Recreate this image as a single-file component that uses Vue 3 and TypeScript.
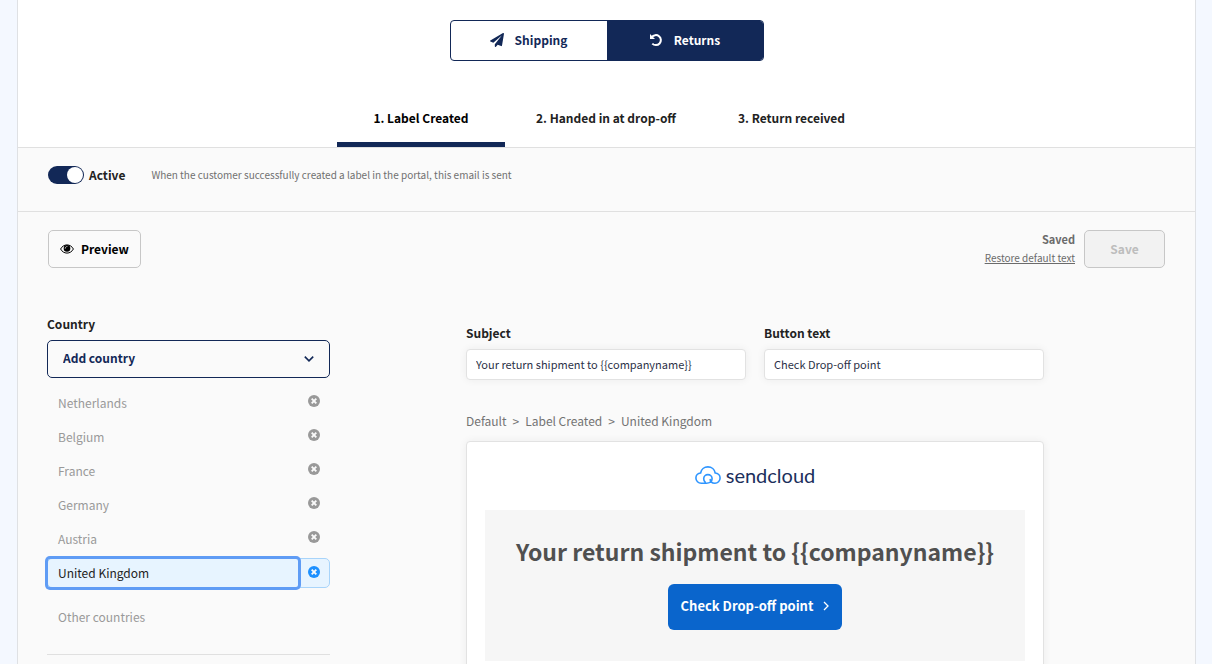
<script setup lang="ts">
import { ref } from 'vue'

interface Country {
  id: string
  name: string
}

const steps: string[] = ['1. Label Created', '2. Handed in at drop-off', '3. Return received']
const activeStep = ref(0)
const mode = ref<'shipping' | 'returns'>('returns')
const active = ref(true)

const countries = ref<Country[]>([
  { id: 'nl', name: 'Netherlands' },
  { id: 'be', name: 'Belgium' },
  { id: 'fr', name: 'France' },
  { id: 'de', name: 'Germany' },
  { id: 'at', name: 'Austria' },
  { id: 'gb', name: 'United Kingdom' },
])
const selected = ref('gb')
const subject = ref('Your return shipment to {{companyname}}')
const buttonText = ref('Check Drop-off point')

function removeCountry(id: string): void {
  countries.value = countries.value.filter((c) => c.id !== id)
}
</script>

<template>
  <main class="page">
    <header class="top">
      <div class="switcher">
        <button type="button" :class="{ on: mode === 'shipping' }" @click="mode = 'shipping'">
          <svg class="icon-mode" viewBox="0 0 512 512" aria-hidden="true">
            <path fill="currentColor" d="M476 3.200 12.500 270.600c-18.100 10.400-15.800 35.600 2.200 43.200L121 358.400l287.300-253.200c5.500-4.900 13.300 2.600 8.600 8.300L176 407v80.500c0 23.600 28.500 32.900 42.500 15.800L282 426l124.600 52.200c14.200 6 30.400-2.900 33-18.200l72-432C515 7.800 493.300-6.800 476 3.200z" />
          </svg>
          Shipping
        </button>
        <button type="button" :class="{ on: mode === 'returns' }" @click="mode = 'returns'">
          <svg class="icon-mode" viewBox="0 0 14 14" aria-hidden="true">
            <path fill="none" stroke="currentColor" stroke-width="2" d="M2.800 4.200A5 5 0 1 1 3.300 10.600" />
            <path fill="currentColor" d="M1 1v5h5z" />
          </svg>
          Returns
        </button>
      </div>
      <nav class="tabs">
        <button
          v-for="(step, i) in steps"
          :key="step"
          type="button"
          :class="{ current: i === activeStep }"
          @click="activeStep = i"
        >{{ step }}</button>
      </nav>
    </header>

    <section class="status">
      <label class="toggle"><input v-model="active" type="checkbox" />Active</label>
      <p>When the customer successfully created a label in the portal, this email is sent</p>
    </section>

    <section class="editor">
      <div class="toolbar">
        <button type="button" class="preview">
          <svg viewBox="0 0 14 10" aria-hidden="true">
            <path fill="none" stroke="currentColor" d="M.600 5C2 2.400 4.300.900 7 .900S12 2.400 13.400 5C12 7.600 9.700 9.100 7 9.100S2 7.600.600 5z" />
            <circle cx="7" cy="4.400" r="3.300" fill="currentColor" />
            <path fill="none" stroke="#fafafa" stroke-width=".7" stroke-linecap="round" d="M5.200 4.300C5.200 3.200 6 2.500 7 2.500" />
          </svg>
          Preview
        </button>
        <div class="saving">
          <div class="saved">
            <strong>Saved</strong>
            <a href="#">Restore default text</a>
          </div>
          <button type="button" class="save" disabled>Save</button>
        </div>
      </div>

      <div class="columns">
        <aside class="countries">
          <label class="field-label" for="country">Country</label>
          <div class="select">
            <select id="country">
              <option>Add country</option>
            </select>
            <svg viewBox="0 0 10 6" aria-hidden="true">
              <path fill="none" stroke="currentColor" stroke-width="1.600" d="M.800.600 5 4.800 9.200.600" />
            </svg>
          </div>
          <ul>
            <li v-for="c in countries" :key="c.id" :class="{ picked: c.id === selected }">
              <button type="button" class="name" @click="selected = c.id">{{ c.name }}</button>
              <button type="button" class="remove" :aria-label="`Remove ${c.name}`" @click="removeCountry(c.id)">
                <svg viewBox="0 0 12 12" aria-hidden="true">
                  <circle cx="6" cy="6" r="6" fill="currentColor" />
                  <path stroke="#fafafa" stroke-width="1.900" d="M3.700 3.700l4.600 4.600M8.300 3.700L3.700 8.300" />
                </svg>
              </button>
            </li>
            <li class="other">
              <button type="button" class="name" @click="selected = 'other'">Other countries</button>
            </li>
          </ul>
          <hr />
        </aside>

        <div class="content">
          <div class="fields">
            <div>
              <label class="field-label" for="subject">Subject</label>
              <input id="subject" v-model="subject" type="text" />
            </div>
            <div>
              <label class="field-label" for="button-text">Button text</label>
              <input id="button-text" v-model="buttonText" type="text" />
            </div>
          </div>
          <div class="crumbs">
            <span>Default</span><span>&gt;</span><span>Label Created</span><span>&gt;</span><span>United Kingdom</span>
          </div>
          <article class="mail">
            <div class="logo">
              <svg viewBox="0 0 26 18" aria-hidden="true">
                <path
                  fill="none"
                  stroke="#2e95ff"
                  stroke-width="1.600"
                  stroke-linecap="round"
                  d="M11.400 17.200H6.200C3.300 17.200.900 15 .900 12.100c0-2.700 2-4.900 4.700-5.100C6.200 3.500 9.200.900 12.900.900S19.600 3.500 20.200 7c2.800.200 4.900 2.400 4.900 5.100 0 2.900-2.400 5.100-5.200 5.100-2.900 0-4.700-1.400-4.700-3.600M11.400 17.200c1.400 0 2.800-.200 4-1M10.200 16.200c-1-.800-1.500-2-1.500-3.400 0-2.400 1.900-4.200 4.200-4.200s4.200 1.800 4.200 4.100c0 1.500-.700 2.700-1.700 3.500"
                />
              </svg>
              <span>sendcloud</span>
            </div>
            <div class="panel">
              <h1>{{ subject }}</h1>
              <a href="#" class="cta">
                {{ buttonText }}
                <svg viewBox="0 0 6 10" aria-hidden="true">
                  <path fill="none" stroke="currentColor" stroke-width="1.300" d="M1 1l4 4-4 4" />
                </svg>
              </a>
            </div>
          </article>
        </div>
      </div>
    </section>
  </main>
</template>

<style>
body {
  margin: 0;
  background: #f4f8ff;
}
</style>

<style scoped>
.page {
  margin: 0 16px 0 17px;
  border: solid #dfe1e4;
  border-width: 0 1px;
  background: #fafafa;
  color: #222;
  font: 12px/18px "Noto Sans CJK SC", "Noto Sans", sans-serif;
}

.page * {
  box-sizing: border-box;
}

button,
select,
input {
  margin: 0;
  font: inherit;
  color: inherit;
}

button {
  padding: 0;
  border: 0;
  background: none;
  cursor: pointer;
}

svg {
  display: block;
  flex: none;
}

.top {
  display: flex;
  flex-direction: column;
  align-items: center;
  gap: 28px;
  padding-top: 20px;
  border-bottom: 1px solid #e0e0e0;
  background: #fff;
}

.switcher {
  display: grid;
  grid-template-columns: 1fr 1fr;
  width: 314px;
  height: 41px;
  overflow: hidden;
  border: 1px solid #122857;
  border-radius: 4px;
  color: #122857;
  font-weight: 700;
}

.switcher button {
  display: flex;
  align-items: center;
  justify-content: center;
  gap: 11px;
  padding-bottom: 2px;
}

.switcher .on {
  background: #122857;
  color: #fff;
}

.icon-mode {
  width: 14px;
  height: 14px;
}

.tabs {
  display: flex;
}

.tabs button {
  height: 58px;
  padding: 5px 31px 0;
  border-bottom: 5px solid transparent;
  font-weight: 700;
}

.tabs .current {
  min-width: 168px;
  border-color: #122857;
  color: #000;
}

.status {
  display: flex;
  align-items: flex-start;
  gap: 26px;
  padding: 18px 30px 24px;
  border-bottom: 1px solid #e0e0e0;
}

.status p {
  margin: 0 0 3px;
  color: #707070;
  font-size: 10px;
}

.toggle {
  display: flex;
  align-items: center;
  gap: 5px;
  font-weight: 700;
}

.toggle input {
  appearance: none;
  display: flex;
  width: 36px;
  height: 18px;
  padding: 1px;
  border-radius: 9px;
  background: #b5b5b5;
}

.toggle input::after {
  content: "";
  width: 16px;
  border-radius: 50%;
  background: #fff;
}

.toggle input:checked {
  justify-content: flex-end;
  background: #122857;
}

.editor {
  padding: 18px 30px 40px;
}

.toolbar,
.saving {
  display: flex;
  align-items: center;
}

.toolbar {
  justify-content: space-between;
}

.saving {
  gap: 9px;
}

.preview,
.save {
  display: flex;
  align-items: center;
  justify-content: center;
  height: 38px;
  border: 1px solid #c7c7c7;
  border-radius: 5px;
  font-weight: 700;
}

.preview {
  gap: 7px;
  padding: 0 11px;
  color: #000;
}

.preview svg {
  width: 14px;
  height: 10px;
}

.save {
  width: 81px;
  background: #f2f2f2;
  color: #bdbdbd;
  cursor: default;
}

.saved {
  display: flex;
  flex-direction: column;
  align-items: flex-end;
  color: #6b6b6b;
  font-size: 11px;
}

.saved a {
  color: inherit;
  font-size: 10px;
  line-height: 20px;
}

.columns {
  display: grid;
  grid-template-columns: minmax(200px, 283px) minmax(400px, 578px);
  gap: 136px;
  margin-left: -1px;
  padding-top: 47px;
}

.field-label {
  display: block;
  font-weight: 700;
}

.select {
  display: grid;
  align-items: center;
  margin-top: 7px;
  color: #122857;
}

.select select,
.select svg {
  grid-area: 1 / 1;
}

.select select {
  appearance: none;
  width: 100%;
  height: 38px;
  padding: 0 15px 2px;
  border: 1px solid #122857;
  border-radius: 5px;
  background: transparent;
  font-weight: 700;
}

.select svg {
  justify-self: end;
  width: 10px;
  height: 6px;
  margin-right: 16px;
  pointer-events: none;
}

ul {
  display: grid;
  gap: 4px;
  margin: 10px 0 0;
  padding: 0;
  list-style: none;
}

li {
  display: flex;
  height: 30px;
  border: 1px solid transparent;
  border-radius: 5px;
  color: #999;
}

.name {
  flex: 1;
  padding: 0 10px;
  text-align: left;
}

.remove {
  display: flex;
  justify-content: center;
  width: 31px;
  padding-top: 6px;
}

.remove svg {
  width: 12px;
  height: 12px;
}

.picked {
  border-color: #a8d4fa;
  background: #e7f4ff;
  color: #222;
}

.picked .name {
  border-radius: 2px;
  box-shadow: 0 0 0 3px #5f9cf5;
}

.picked .remove {
  padding-top: 7px;
  color: #1d90ff;
}

.other {
  margin-top: 10px;
}

hr {
  height: 1px;
  margin: 22px 0 0;
  border: 0;
  background: #e0e0e0;
}

.content {
  padding-top: 9px;
}

.fields {
  display: grid;
  grid-template-columns: 1fr 1fr;
  gap: 18px;
}

.fields input {
  display: block;
  width: 100%;
  height: 31px;
  margin-top: 7px;
  padding: 0 9px 2px;
  border: 1px solid #e2e2e2;
  border-radius: 4px;
  background: #fff;
  box-shadow: 0 0 8px rgba(0, 0, 0, 0.06);
  color: #2b3147;
  font-size: 11px;
}

.crumbs {
  display: flex;
  gap: 6px;
  margin-top: 32px;
  color: #737373;
}

.mail {
  min-height: 260px;
  margin-top: 11px;
  padding: 20px 18px;
  border: 1px solid #e2e2e2;
  border-radius: 4px;
  background: #fff;
  box-shadow: 0 0 8px rgba(0, 0, 0, 0.06);
}

.logo {
  display: flex;
  align-items: center;
  justify-content: center;
  gap: 5px;
  height: 28px;
  padding-bottom: 2px;
  color: #1c2f5c;
  font: 20px/26px Lato, sans-serif;
}

.logo svg {
  width: 26px;
  height: 18px;
}

.panel {
  display: flex;
  flex-direction: column;
  align-items: center;
  height: 151px;
  margin-top: 20px;
  padding-top: 24px;
  background: #f6f6f6;
}

h1 {
  margin: 0;
  color: #505050;
  font-size: 23px;
  line-height: 34px;
}

.cta {
  display: flex;
  align-items: center;
  gap: 10px;
  height: 46px;
  margin-top: 16px;
  padding: 0 13px 2px;
  border-radius: 6px;
  background: #0a65cc;
  color: #fff;
  font-size: 13px;
  font-weight: 700;
  text-decoration: none;
}

.cta svg {
  width: 6px;
  height: 10px;
}
</style>
